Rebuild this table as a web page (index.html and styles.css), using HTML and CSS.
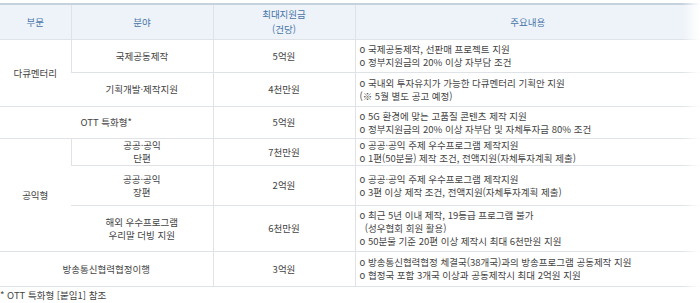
FILE: index.html
```html
<!DOCTYPE html>
<html lang="ko">
<head>
    <meta charset="UTF-8">
    <title>지원 분야</title>
    <link rel="stylesheet" href="styles.css">
</head>
<body>
    <div class="table-wrap">
        <table class="support-table">
            <colgroup>
                <col class="c-part">
                <col class="c-field">
                <col class="c-amount">
                <col class="c-desc">
            </colgroup>
            <thead>
                <tr>
                    <th>부문</th>
                    <th>분야</th>
                    <th>최대지원금<br>(건당)</th>
                    <th>주요내용</th>
                </tr>
            </thead>
            <tbody>
                <tr class="r1">
                    <td rowspan="2">다큐멘터리</td>
                    <td>국제공동제작</td>
                    <td>5억원</td>
                    <td class="desc">o 국제공동제작, 선판매 프로젝트 지원<br>o 정부지원금의 20% 이상 자부담 조건</td>
                </tr>
                <tr class="r2">
                    <td>기획개발·제작지원</td>
                    <td>4천만원</td>
                    <td class="desc">o 국내외 투자유치가 가능한 다큐멘터리 기획안 지원<br>(※ 5월 별도 공고 예정)</td>
                </tr>
                <tr class="r3">
                    <td colspan="2">OTT 특화형*</td>
                    <td>5억원</td>
                    <td class="desc">o 5G 환경에 맞는 고품질 콘텐츠 제작 지원<br>o 정부지원금의 20% 이상 자부담 및 자체투자금 80% 조건</td>
                </tr>
                <tr class="r4">
                    <td rowspan="3">공익형</td>
                    <td>공공·공익<br>단편</td>
                    <td>7천만원</td>
                    <td class="desc">o 공공·공익 주제 우수프로그램 제작지원<br>o 1편(50분물) 제작 조건, 전액지원(자체투자계획 제출)</td>
                </tr>
                <tr class="r5">
                    <td>공공·공익<br>장편</td>
                    <td>2억원</td>
                    <td class="desc">o 공공·공익 주제 우수프로그램 제작지원<br>o 3편 이상 제작 조건, 전액지원(자체투자계획 제출)</td>
                </tr>
                <tr class="r6">
                    <td>해외 우수프로그램<br>우리말 더빙 지원</td>
                    <td>6천만원</td>
                    <td class="desc">o 최근 5년 이내 제작, 19등급 프로그램 불가<br>&nbsp;&nbsp;(성우협회 회원 활용)<br>o 50분물 기준 20편 이상 제작시 최대 6천만원 지원</td>
                </tr>
                <tr class="r7">
                    <td colspan="2">방송통신협력협정이행</td>
                    <td>3억원</td>
                    <td class="desc">o 방송통신협력협정 체결국(38개국)과의 방송프로그램 공동제작 지원<br>o 협정국 포함 3개국 이상과 공동제작시 최대 2억원 지원</td>
                </tr>
            </tbody>
        </table>
    </div>
    <p class="note">* OTT 특화형 [붙임1] 참조</p>
</body>
</html>
```

FILE: styles.css
```css
body {
    margin: 0;
    font-family: "Noto Sans CJK KR", "Noto Sans", sans-serif;
    font-size: 9.5px;
    color: #444;
    background: #fff;
}

.table-wrap {
    position: relative;
    padding-top: 3px;
}

/* soft fade on the right edge, like a scroll hint */
.table-wrap::after {
    content: '';
    position: absolute;
    top: 0;
    right: 0;
    width: 18px;
    height: 100%;
    background: linear-gradient(to right, rgba(255, 255, 255, 0), #fff);
}

.support-table {
    width: 100%;
    border-collapse: collapse;
    table-layout: fixed;
    border-top: 2px solid #c5d2de;
    line-height: 13px;
}

.c-part { width: 71px; }
.c-field { width: 142px; }
.c-amount { width: 142px; }

.support-table th {
    background-color: #eef3f9;
    color: #4775a8;
    font-weight: normal;
    height: 34px;
    line-height: 15px;
    padding: 0 4px;
    border-left: 1px solid #dfe3e7;
    border-bottom: 1px solid #dfe3e7;
}

.support-table td {
    text-align: center;
    padding: 0 4px;
    border-left: 1px solid #dfe3e7;
    border-bottom: 1px solid #dfe3e7;
}

.support-table th:first-child,
.support-table td:first-child {
    border-left: none;
}

.support-table td.desc {
    text-align: left;
    padding-left: 4px;
}

.r1 { height: 33px; }
.r2 { height: 34px; }
.r3 { height: 32px; }
.r4 { height: 27px; }
.r5 { height: 40px; }
.r6 { height: 46px; }
.r7 { height: 35px; }

.note {
    margin: 2px 0 0;
    line-height: 13px;
}
```
